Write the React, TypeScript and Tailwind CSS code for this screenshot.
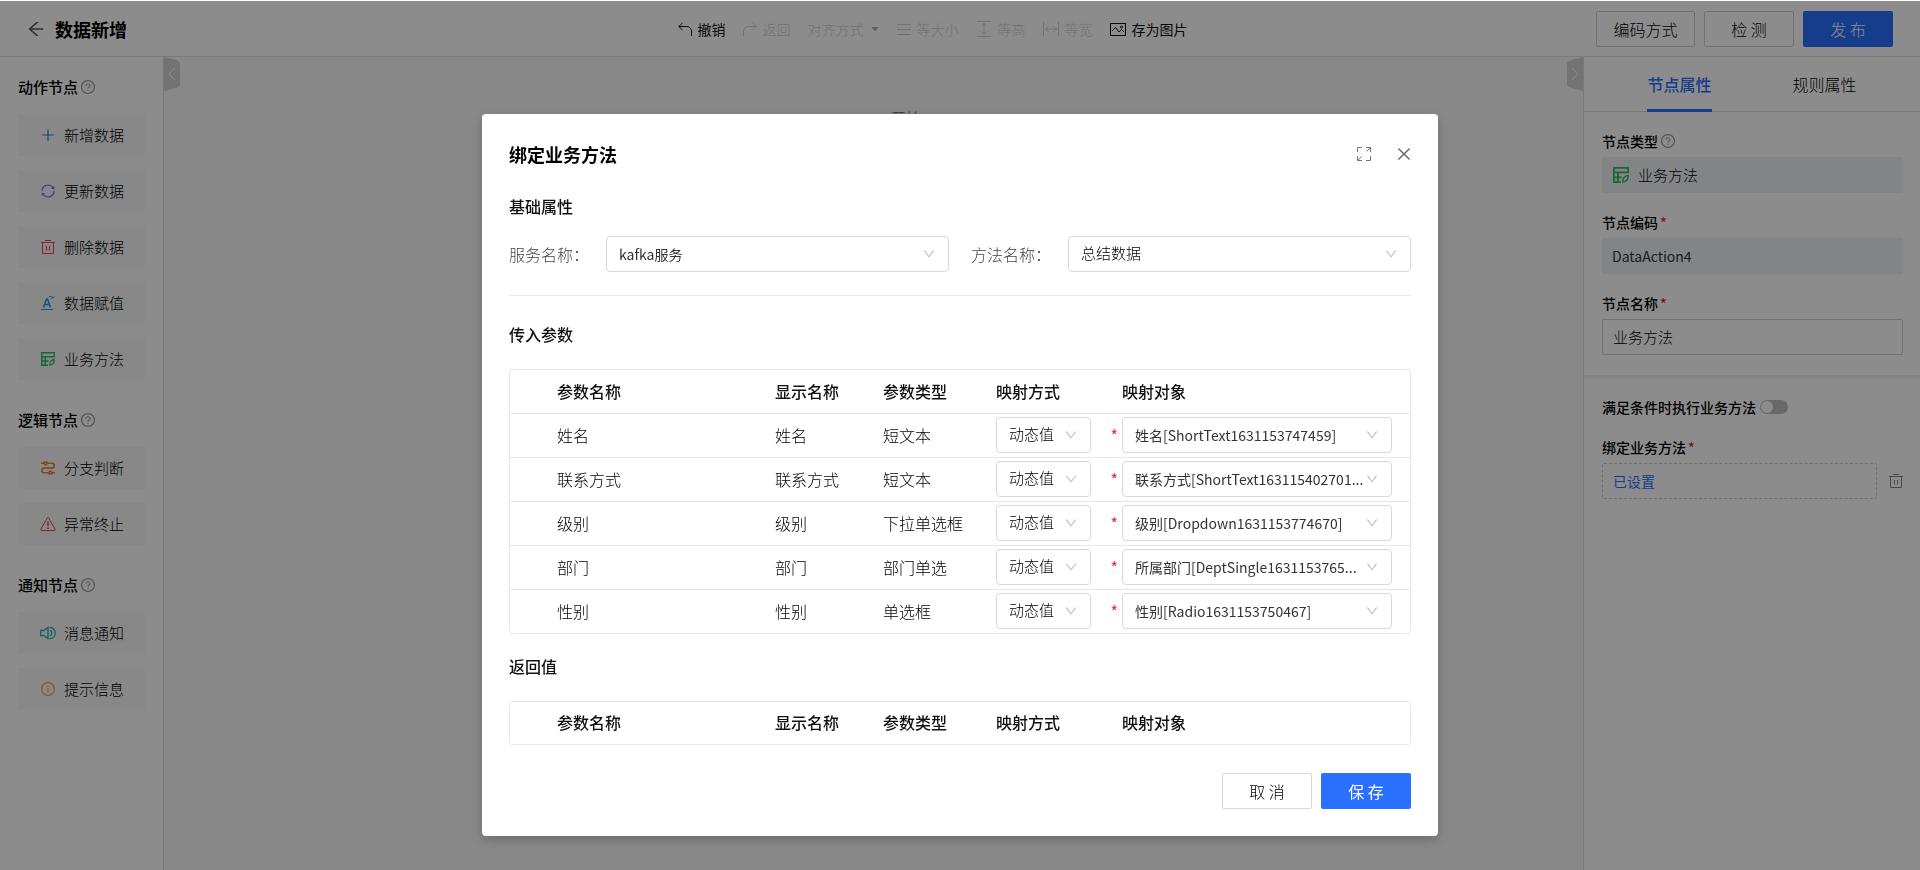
import { useState } from 'react';
import type { ReactNode } from 'react';
import {
  AiFillCaretDown,
  AiOutlineArrowLeft,
  AiOutlineClose,
  AiOutlineDown,
  AiOutlineInfoCircle,
  AiOutlinePlus,
  AiOutlineQuestionCircle,
  AiOutlineSync,
} from 'react-icons/ai';

type IconProps = { className?: string };

const TrashIcon = ({ className }: IconProps) => (
  <svg viewBox="0 0 14 14" className={className} fill="none" stroke="currentColor">
    <path d="M4 .5h6M0 2.5h14M1.5 2.5v11h11v-11M5.5 6v4.5M8.5 6v4.5" />
  </svg>
);

const AssignIcon = ({ className }: IconProps) => (
  <svg viewBox="0 0 14 14" className={className} fill="none" stroke="currentColor">
    <path d="M0 13.5h12" />
    <path d="M2.5 11.5l3-8.500h1l3 8.500M4 8.500h4.500" strokeWidth="1.5" />
    <path d="M8 1c1.500-.8 2.500-.5 3.500.3l2-.3M11.500 1.300l-1 1.700" />
  </svg>
);

const MethodIcon = ({ className }: IconProps) => (
  <svg viewBox="0 0 14 14" className={className} fill="none" stroke="currentColor" strokeWidth="1.5">
    <path d="M7 13.200H.8V.8h12.400v4.400M.8 4.700h12.400M.8 9h6.700M4.300 4.700v8.500" />
    <path d="M8.800 13.200c-.4-2.800 1-5.200 4.400-5.900.3 3-1 5.300-4.400 5.900Z" strokeWidth="1.200" />
  </svg>
);

const BranchIcon = ({ className }: IconProps) => (
  <svg viewBox="0 0 14 14" className={className} fill="none" stroke="currentColor" strokeWidth="1.5">
    <path d="M0 2.300h3M6.200 2.300h4.600a2.300 2.300 0 0 1 0 4.700H3.200a2.300 2.300 0 0 0 0 4.700h4.600M11 11.700h3" />
    <circle cx="4.600" cy="2.300" r="1.500" />
    <circle cx="9.400" cy="11.700" r="1.500" />
  </svg>
);

const WarnIcon = ({ className }: IconProps) => (
  <svg viewBox="0 0 16 14" className={className} fill="none" stroke="currentColor" strokeLinejoin="round">
    <path d="M7.300 1.100.8 12.300c-.3.600 0 1.200.7 1.200h13c.7 0 1-.6.700-1.200L8.700 1.100c-.3-.6-1.100-.6-1.400 0Z" />
    <path d="M8 4.500v4.500M8 10.500v1.500" strokeWidth="1.500" />
  </svg>
);

const SpeakerIcon = ({ className }: IconProps) => (
  <svg viewBox="0 0 16 14" className={className} fill="none" stroke="currentColor" strokeWidth="1.3">
    <path d="M.6 4.500h3L8 1.500v11L3.600 9.500h-3Z" />
    <path d="M10 4.300c2.300.6 2.300 4.800 0 5.400M9.500 1.300c7.600.4 7.600 11 0 11.400" />
  </svg>
);

const UndoIcon = ({ className }: IconProps) => (
  <svg viewBox="0 0 14 14" className={className} fill="none" stroke="currentColor">
    <path d="M4.500 1 .8 4.500 4.500 8M.8 4.500h8a4.700 4.700 0 0 1 4.700 4.700V14" />
  </svg>
);

const RedoIcon = ({ className }: IconProps) => (
  <svg viewBox="0 0 14 14" className={className} fill="none" stroke="currentColor">
    <path d="M9.500 1l3.700 3.500L9.500 8M13.200 4.500h-8A4.700 4.700 0 0 0 .5 9.200V14" />
  </svg>
);

const LinesIcon = ({ className }: IconProps) => (
  <svg viewBox="0 0 14 14" className={className} fill="none" stroke="currentColor">
    <path d="M0 2.500h14M0 7.500h14M0 12.500h14" />
  </svg>
);

const SameHeightIcon = ({ className }: IconProps) => (
  <svg viewBox="0 0 16 16" className={className} fill="none" stroke="currentColor">
    <path d="M1 .5h14M1 15.500h14M8 2.500v11M5 5.500l3-3 3 3M5 10.500l3 3 3-3" />
  </svg>
);

const SameWidthIcon = ({ className }: IconProps) => (
  <svg viewBox="0 0 16 16" className={className} fill="none" stroke="currentColor">
    <path d="M.5 1v14M15.500 1v14M2.500 8h11M5.500 5l-3 3 3 3M10.500 5l3 3-3 3" />
  </svg>
);

const PictureIcon = ({ className }: IconProps) => (
  <svg viewBox="0 0 16 16" className={className} fill="none" stroke="currentColor">
    <rect x=".5" y="2.500" width="15" height="12" />
    <path d="m2 10 3.500-3.500 3.500 4.500 2.500-2.500L14 11" />
    <circle cx="11.500" cy="6" r="1" />
  </svg>
);

const ExpandIcon = ({ className }: IconProps) => (
  <svg viewBox="0 0 14 14" className={className} fill="none" stroke="currentColor">
    <path d="M.5 5V.5H5M9 .5h4.500V5M13.500 9v4.500H9M5 13.500H.5V9M13.500.5l-4 4M.5 13.500l4-4" />
  </svg>
);

// 画布两侧的收起把手，默认朝左
const HandleIcon = ({ className = '' }: IconProps) => (
  <svg viewBox="0 0 16 34" className={`w-4 h-[34px] ${className}`} fill="none">
    <path d="M0 0l12.500 3.200Q16 4.200 16 7.500v19q0 3.300-3.500 4.300L0 34Z" fill="#d2d2d2" />
    <path d="m11 11-6 6 6 6" stroke="#fff" />
  </svg>
);

const nodeGroups = [
  {
    title: '动作节点',
    items: [
      { label: '新增数据', icon: AiOutlinePlus, style: 'h-4 text-[#3f78f0]' },
      { label: '更新数据', icon: AiOutlineSync, style: 'h-4 text-[#7f6be0]' },
      { label: '删除数据', icon: TrashIcon, style: 'h-3.5 text-[#f0434b]' },
      { label: '数据赋值', icon: AssignIcon, style: 'h-3.5 text-[#2299e0]' },
      { label: '业务方法', icon: MethodIcon, style: 'h-3.5 text-[#2fb866]' },
    ],
  },
  {
    title: '逻辑节点',
    items: [
      { label: '分支判断', icon: BranchIcon, style: 'h-3.5 text-[#f07a35]' },
      { label: '异常终止', icon: WarnIcon, style: 'h-3.5 text-[#f0434b]' },
    ],
  },
  {
    title: '通知节点',
    items: [
      { label: '消息通知', icon: SpeakerIcon, style: 'h-3.5 text-[#16b3b3]' },
      { label: '提示信息', icon: AiOutlineInfoCircle, style: 'h-4 text-[#f0a62e]' },
    ],
  },
];

const tools = [
  { label: '撤销', icon: UndoIcon, size: 'w-3.5 h-3.5', enabled: true },
  { label: '返回', icon: RedoIcon, size: 'w-3.5 h-3.5', enabled: false },
  { label: '对齐方式', icon: null, size: '', enabled: false },
  { label: '等大小', icon: LinesIcon, size: 'w-3.5 h-3.5', enabled: false },
  { label: '等高', icon: SameHeightIcon, size: 'w-4 h-4', enabled: false },
  { label: '等宽', icon: SameWidthIcon, size: 'w-4 h-4', enabled: false },
  { label: '存为图片', icon: PictureIcon, size: 'w-4 h-4', enabled: true },
];

const params = [
  { name: '姓名', type: '短文本', target: '姓名[ShortText1631153747459]' },
  { name: '联系方式', type: '短文本', target: '联系方式[ShortText163115402701...' },
  { name: '级别', type: '下拉单选框', target: '级别[Dropdown1631153774670]' },
  { name: '部门', type: '部门单选', target: '所属部门[DeptSingle1631153765...' },
  { name: '性别', type: '单选框', target: '性别[Radio1631153750467]' },
];

function Select({ id, label, value, className }: {
  id?: string;
  label?: string;
  value: string;
  className: string;
}) {
  return (
    <div className={`relative ${className}`}>
      <select
        id={id}
        aria-label={label}
        className="w-full h-9 pl-3 pr-6 pb-px appearance-none rounded border border-[#d9d9d9] bg-white"
      >
        <option>{value}</option>
      </select>
      <AiOutlineDown size={14} className="absolute right-[13px] top-[11px] text-[#bfbfbf] pointer-events-none" />
    </div>
  );
}

function ParamTable({ rows }: { rows: typeof params }) {
  return (
    <div className="rounded border border-[#e8e8e8] border-b-0 overflow-hidden">
      <table className="w-full table-fixed border-collapse text-base text-black">
        <colgroup>
          <col className="w-[265px]" />
          <col className="w-[108px]" />
          <col className="w-[113px]" />
          <col className="w-[126px]" />
          <col />
        </colgroup>
        <thead>
          <tr className="h-[43px] border-b border-[#e8e8e8] text-left text-[#111]">
            <th className="p-0 pl-[47px] pb-px font-medium">参数名称</th>
            <th className="p-0 pb-px font-medium">显示名称</th>
            <th className="p-0 pb-px font-medium">参数类型</th>
            <th className="p-0 pb-px font-medium">映射方式</th>
            <th className="p-0 pb-px font-medium">映射对象</th>
          </tr>
        </thead>
        <tbody>
          {rows.map((row) => (
            <tr key={row.name} className="h-11 border-b border-[#e8e8e8]">
              <td className="p-0 pl-[47px]">{row.name}</td>
              <td className="p-0">{row.name}</td>
              <td className="p-0">{row.type}</td>
              <td className="p-0 pr-1">
                <div className="flex items-center justify-between">
                  <Select label={`${row.name}映射方式`} value="动态值" className="w-[95px] text-[15px] text-black" />
                  <span className="text-base font-normal text-[#f5222d]">*</span>
                </div>
              </td>
              <td className="p-0 pr-[18px]">
                <Select label={`${row.name}映射对象`} value={row.target} className="w-full text-sm font-normal text-[#333]" />
              </td>
            </tr>
          ))}
        </tbody>
      </table>
    </div>
  );
}

function Header() {
  return (
    <header className="flex items-center h-[57px] pt-[2px] pl-[26px] pr-[27px] bg-white border-b border-[#e0e0e0]">
      <div className="flex flex-1 items-center gap-[9px]">
        <button type="button" aria-label="后退" className="text-[#555]">
          <AiOutlineArrowLeft size={20} />
        </button>
        <h1 className="text-lg font-bold text-black">数据新增</h1>
      </div>
      <nav className="flex items-center gap-[17px] mr-[54px] text-sm">
        {tools.map(({ label, icon: Icon, size, enabled }) => (
          <button
            key={label}
            type="button"
            disabled={!enabled}
            className={`flex items-center gap-[6px] ${enabled ? 'font-normal text-[#111]' : 'text-[#d0d0d0]'}`}
          >
            {Icon && <Icon className={size} />}
            {label}
            {!Icon && <AiFillCaretDown size={10} className="text-[#aaa]" />}
          </button>
        ))}
      </nav>
      <div className="flex flex-1 items-center justify-end gap-[9px] text-base text-black">
        <button type="button" className="h-9 w-[99px] rounded-xs border border-[#d0d0d0]">编码方式</button>
        <button type="button" className="h-9 w-[90px] rounded-xs border border-[#d0d0d0]">检 测</button>
        <button type="button" className="h-9 w-[90px] rounded-xs bg-[#2970ff] text-white">发 布</button>
      </div>
    </header>
  );
}

function NodePanel() {
  return (
    <aside className="flex flex-col gap-7 w-[164px] shrink-0 px-[18px] pt-[18px] bg-white border-r border-[#dcdcdc]">
      {nodeGroups.map((group) => (
        <section key={group.title}>
          <h2 className="flex items-center gap-[2px] h-6 text-[15px] font-medium text-black">
            {group.title}
            <AiOutlineQuestionCircle size={16} className="text-[#999]" />
          </h2>
          <div className="flex flex-col gap-[14px] mt-[15px]">
            {group.items.map(({ label, icon: Icon, style }) => (
              <button
                key={label}
                type="button"
                className="flex items-center h-[42px] pl-[22px] gap-2 rounded-xs bg-[#f7f7f7] text-[15px] text-black"
              >
                <Icon className={`w-4 ${style}`} />
                {label}
              </button>
            ))}
          </div>
        </section>
      ))}
    </aside>
  );
}

function Field({ label, id, required, help, children }: {
  label: string;
  id?: string;
  required?: boolean;
  help?: boolean;
  children: ReactNode;
}) {
  return (
    <div>
      <label htmlFor={id} className="flex items-center gap-[2px] h-5 mb-[6px] text-sm font-medium text-black">
        {label}
        {required && <span className="text-[#f5222d]">*</span>}
        {help && <AiOutlineQuestionCircle size={16} className="text-[#999]" />}
      </label>
      {children}
    </div>
  );
}

function PropertyPanel() {
  const [conditional, setConditional] = useState(false);

  return (
    <aside className="w-[337px] shrink-0 bg-white border-l border-[#dcdcdc]">
      <div role="tablist" className="flex justify-center gap-[81px] h-[55px] border-b border-[#e0e0e0] text-base">
        <button type="button" role="tab" aria-selected className="h-[55px] pt-[2px] border-b-3 border-[#2970ff] font-medium text-[#2970ff]">
          节点属性
        </button>
        <button type="button" role="tab" aria-selected={false} className="h-[55px] pb-px text-black">
          规则属性
        </button>
      </div>
      <div className="flex flex-col gap-[19px] pl-[18px] pr-[17px] pt-[19px] pb-5 border-b-3 border-[#f0f0f0]">
        <Field label="节点类型" help>
          <div className="flex items-center gap-[9px] h-9 pl-[11px] rounded-xs bg-[#eef1f5] text-[15px] text-black">
            <MethodIcon className="w-4 h-4 text-[#2fb866]" />
            业务方法
          </div>
        </Field>
        <Field label="节点编码" id="node-code" required>
          <input
            id="node-code"
            disabled
            defaultValue="DataAction4"
            className="w-full h-9 px-[10px] rounded-xs bg-[#eef1f5] text-sm font-normal text-[#333]"
          />
        </Field>
        <Field label="节点名称" id="node-name" required>
          <input
            id="node-name"
            defaultValue="业务方法"
            className="w-full h-9 px-[10px] pb-px rounded-xs border border-[#d0d0d0] text-[15px] text-black"
          />
        </Field>
      </div>
      <div className="flex flex-col gap-5 pl-[18px] pr-[17px] pt-[19px] pb-5">
        <div className="flex items-center gap-1 h-5">
          <label htmlFor="conditional" className="text-sm font-medium text-black">满足条件时执行业务方法</label>
          <input
            id="conditional"
            type="checkbox"
            role="switch"
            checked={conditional}
            onChange={(e) => setConditional(e.target.checked)}
            className="flex items-center w-7 h-[14px] px-px appearance-none rounded-full bg-[#bfbfbf] checked:bg-[#2970ff] before:block before:w-3 before:h-3 before:rounded-full before:bg-white checked:before:ml-auto"
          />
        </div>
        <Field label="绑定业务方法" id="bind-method" required>
          <div className="flex items-center gap-3">
            <button
              id="bind-method"
              type="button"
              className="flex-1 h-9 px-[10px] rounded-xs border border-dashed border-[#ccc] text-left text-sm font-normal text-[#2970ff]"
            >
              已设置
            </button>
            <button type="button" aria-label="删除" className="text-[#888]">
              <TrashIcon className="w-3.5 h-3.5" />
            </button>
          </div>
        </Field>
      </div>
    </aside>
  );
}

function BindMethodDialog() {
  return (
    <div
      role="dialog"
      aria-labelledby="dialog-title"
      className="w-[956px] h-fit px-[27px] pt-[26px] pb-[27px] rounded bg-white shadow-[0_4px_12px_rgba(0,0,0,0.2)]"
    >
      <div className="flex items-center h-7">
        <h2 id="dialog-title" className="flex-1 text-lg font-bold text-black">绑定业务方法</h2>
        <button type="button" aria-label="全屏" className="mr-6 text-[#777]">
          <ExpandIcon className="w-3.5 h-3.5" />
        </button>
        <button type="button" aria-label="关闭" className="-mr-[2px] text-[#666]">
          <AiOutlineClose size={18} />
        </button>
      </div>

      <h3 className="mt-[26px] text-base font-medium text-[#111]">基础属性</h3>
      <div className="flex justify-between mt-[18px] pb-[23px] border-b border-[#e8e8e8]">
        <div className="flex items-center">
          <label htmlFor="service" className="w-[97px] text-base text-[#444]">服务名称：</label>
          <Select id="service" value="kafka服务" className="w-[343px] text-sm font-normal text-[#333]" />
        </div>
        <div className="flex items-center">
          <label htmlFor="method" className="w-[97px] text-base text-[#444]">方法名称：</label>
          <Select id="method" value="总结数据" className="w-[343px] text-[15px] text-black" />
        </div>
      </div>

      <h3 className="mt-[26px] mb-[23px] text-base font-medium text-[#111]">传入参数</h3>
      <ParamTable rows={params} />
      <h3 className="mt-5 mb-[23px] text-base font-medium text-[#111]">返回值</h3>
      <ParamTable rows={[]} />

      <div className="flex justify-end gap-[9px] mt-7 text-base">
        <button type="button" className="h-9 w-[90px] rounded-xs border border-[#d9d9d9] text-black">取 消</button>
        <button type="button" className="h-9 w-[90px] rounded-xs bg-[#2970ff] font-normal text-white">保 存</button>
      </div>
    </div>
  );
}

export default function App() {
  return (
    <div className="flex flex-col min-h-screen font-['Noto_Sans_CJK_SC',sans-serif] font-light">
      <Header />
      <div className="flex flex-1">
        <NodePanel />
        <main className="relative flex-1 bg-[#f7f7f7]">
          <button type="button" aria-label="收起节点面板" className="absolute left-0 top-0">
            <HandleIcon />
          </button>
          <button type="button" aria-label="收起属性面板" className="absolute right-0 top-0">
            <HandleIcon className="rotate-180" />
          </button>
          <div className="absolute left-[727px] top-[50px] text-[15px] text-[#555]">开始</div>
        </main>
        <PropertyPanel />
      </div>

      {/* 遮罩 + 弹窗 */}
      <div className="fixed inset-x-0 top-px bottom-0 flex justify-center pt-[113px] bg-black/45">
        <BindMethodDialog />
      </div>
    </div>
  );
}
